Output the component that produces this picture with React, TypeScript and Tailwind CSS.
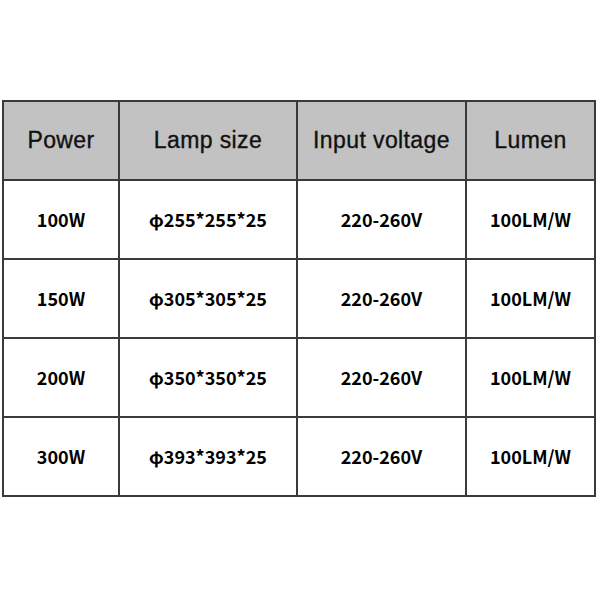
import React from "react";

const headers = ["Power", "Lamp size", "Input voltage", "Lumen"];
const rows = [
  ["100W", "φ255*255*25", "220-260V", "100LM/W"],
  ["150W", "φ305*305*25", "220-260V", "100LM/W"],
  ["200W", "φ350*350*25", "220-260V", "100LM/W"],
  ["300W", "φ393*393*25", "220-260V", "100LM/W"],
];

export default function App() {
  return (
    <div className="w-[600px] h-[600px] bg-white pt-[100px] pl-[2px]">
      <div className="w-[594px] grid grid-cols-[114px_176px_167px_127px] auto-rows-[77px] gap-[2px] p-[2px] bg-[#3a3a3a]">
        {headers.map((h) => (
          <div
            key={h}
            className="bg-[#c2c2c2] flex items-center justify-center text-[23px] tracking-[0.4px] text-[#111111] [-webkit-text-stroke:0.35px_#111111]"
            style={{ fontFamily: '"Liberation Sans", Arial, sans-serif' }}
          >
            {h}
          </div>
        ))}
        {rows.map((r, i) =>
          r.map((c, j) => (
            <div
              key={i + "-" + j}
              className="bg-white flex items-center justify-center text-[18px] font-bold text-black"
              style={{ fontFamily: '"Noto Sans CJK SC", "Noto Sans", sans-serif' }}
            >
              {c}
            </div>
          ))
        )}
      </div>
    </div>
  );
}
